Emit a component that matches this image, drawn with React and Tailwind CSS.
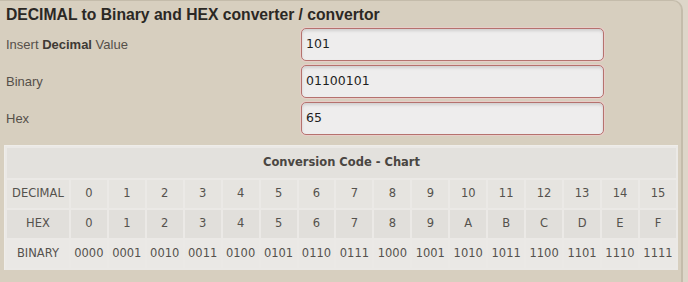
import React from 'react';

const hexDigits = '0123456789ABCDEF'.split('');

const inputs = [
  { label: <>Insert <b className="font-bold text-[#3f3a34]">Decimal</b> Value</>, value: '101' },
  { label: 'Binary', value: '01100101' },
  { label: 'Hex', value: '65' },
];

export default function App() {
  const cols = hexDigits.map((h, i) => ({
    dec: String(i),
    hex: h,
    bin: i.toString(2).padStart(4, '0'),
  }));

  return (
    <div className="w-[688px] h-[282px] overflow-hidden bg-[#ddd6c9]">
      <div className="w-[683px] h-full bg-[#d7cfbf] border-r-2 border-t border-[#c4bcab] rounded-tr-[10px] pt-[4px] font-['Liberation_Sans',Arial,sans-serif]">
        {/* Title */}
        <h1 className="pl-[6px] text-[15.7px] leading-[20px] font-bold text-[#2b2824]">
          DECIMAL to Binary and HEX converter / convertor
        </h1>

        {/* Fields */}
        <div className="mt-[3px] flex flex-col gap-[4px]">
          {inputs.map((f, i) => (
            <div key={i} className="flex items-center h-[33px]">
              <label className="w-[301px] pl-[6px] text-[13px] text-[#55504a]">{f.label}</label>
              <div className="w-[303px] h-[33px] rounded-[5px] border-[1.5px] border-[#b5726e] bg-[#eeeded] shadow-[0_0_0_1px_#e8cdc8,inset_0_2px_3px_rgba(0,0,0,0.12)] flex items-center pl-[4px] text-[12.5px] text-[#1e1e1e] font-['DejaVu_Sans',Verdana,sans-serif]">
                {f.value}
              </div>
            </div>
          ))}
        </div>

        {/* Chart */}
        <div className="mt-[10px] ml-[4px] w-[674px] bg-[#ebe9e6] border-l border-t border-[#efede9]">
          <table className="w-full border-separate border-spacing-[2px] text-[11.5px] text-[#55524d] font-['DejaVu_Sans',Verdana,sans-serif]">
            <thead>
              <tr>
                <th colSpan={17} className="h-[30px] bg-[#e3e1dd] font-bold text-[#4a4642] text-center">
                  Conversion Code - Chart
                </th>
              </tr>
            </thead>
            <tbody>
              <tr>
                <td className="h-[28px] w-[62px] bg-[#e6e4e0] text-center">DECIMAL</td>
                {cols.map((c) => (
                  <td key={c.dec} className="w-[36px] bg-[#e6e4e0] text-center">{c.dec}</td>
                ))}
              </tr>
              <tr>
                <td className="h-[28px] bg-[#e1dfdb] text-center">HEX</td>
                {cols.map((c) => (
                  <td key={c.hex} className="bg-[#e1dfdb] text-center">{c.hex}</td>
                ))}
              </tr>
              <tr>
                <td className="h-[28px] bg-[#eae8e5] text-center">BINARY</td>
                {cols.map((c) => (
                  <td key={c.bin} className="bg-[#eae8e5] text-center">{c.bin}</td>
                ))}
              </tr>
            </tbody>
          </table>
        </div>
      </div>
    </div>
  );
}
